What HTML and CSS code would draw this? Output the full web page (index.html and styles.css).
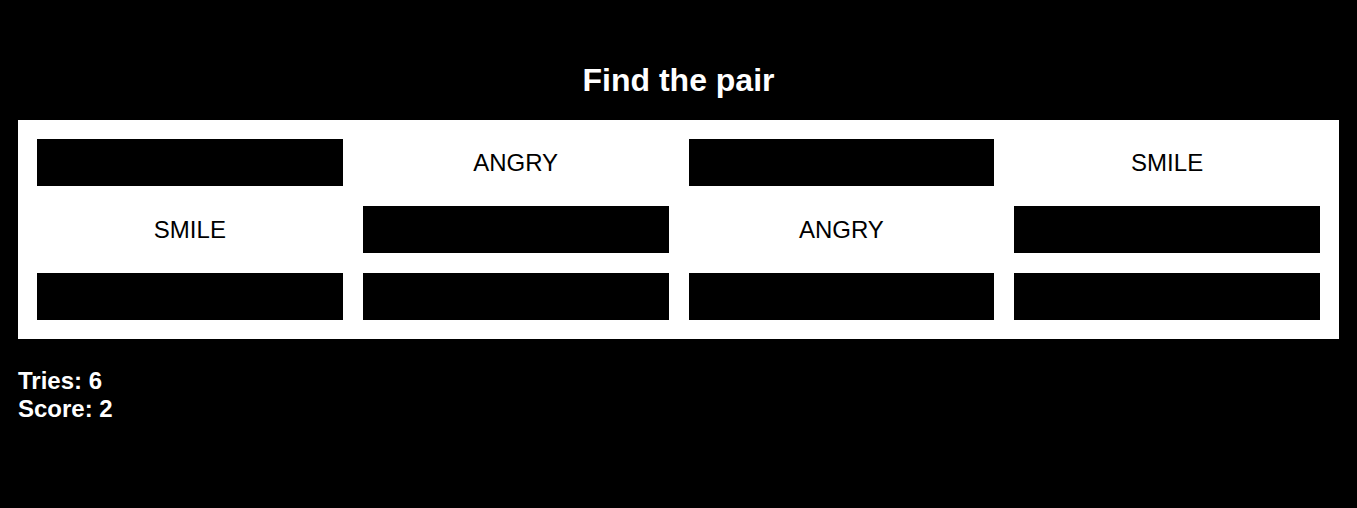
FILE: index.html
```html
<!DOCTYPE html>
<html lang="en">
<head>
<meta charset="utf-8">
<title>Find the pair</title>
<link rel="stylesheet" href="styles.css">
</head>
<body>
  <h1 class="title">Find the pair</h1>
  <div class="board">
    <div class="card hidden"></div>
    <div class="card shown">ANGRY</div>
    <div class="card hidden"></div>
    <div class="card shown">SMILE</div>
    <div class="card shown">SMILE</div>
    <div class="card hidden"></div>
    <div class="card shown">ANGRY</div>
    <div class="card hidden"></div>
    <div class="card hidden"></div>
    <div class="card hidden"></div>
    <div class="card hidden"></div>
    <div class="card hidden"></div>
  </div>
  <div class="stats">
    <div class="stat">Tries: 6</div>
    <div class="stat">Score: 2</div>
  </div>
</body>
</html>
```

FILE: styles.css
```css
html, body {
  margin: 0;
  padding: 0;
  background: #000;
}

body {
  font-family: "Liberation Sans", Arial, sans-serif;
  color: #fff;
}

.title {
  margin: 62px 0 21px;
  font-size: 32px;
  font-weight: bold;
  text-align: center;
  line-height: 37px;
}

.board {
  margin: 0 18px;
  padding: 19px;
  background: #fff;
  display: grid;
  grid-template-columns: repeat(4, 1fr);
  column-gap: 20px;
  row-gap: 20px;
}

.card {
  height: 47px;
  display: flex;
  align-items: center;
  justify-content: center;
  font-size: 24px;
  color: #000;
}

.card.hidden {
  background: #000;
}

.card.shown {
  background: #fff;
}

.stats {
  margin: 28px 18px 0;
  font-size: 24px;
  font-weight: bold;
  line-height: 28px;
}
```
